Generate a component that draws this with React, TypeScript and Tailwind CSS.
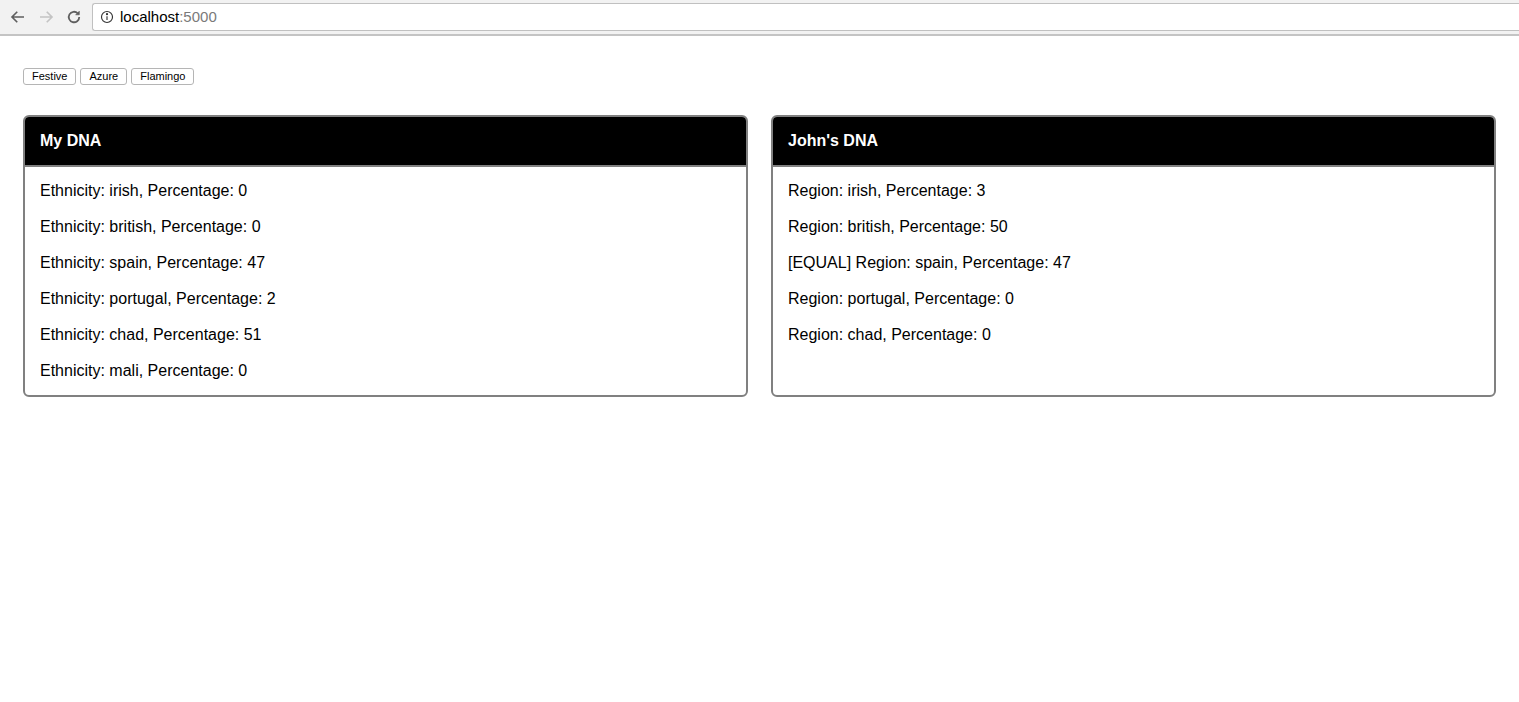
import React from "react";

function Card({ title, rows }: { title: string; rows: string[] }) {
  return (
    <div className="flex-1 border-2 border-[#808080] rounded-[6px] overflow-hidden flex flex-col">
      <div className="bg-black text-white font-bold text-[16px] leading-[18px] h-[50px] flex items-center px-[15px] border-b-2 border-[#808080]">
        {title}
      </div>
      <div className="flex flex-col gap-[18px] px-[15px] pt-[15px] pb-[15px] text-[16px] leading-[18px] text-black">
        {rows.map((r, i) => (
          <div key={i}>{r}</div>
        ))}
      </div>
    </div>
  );
}

export default function App() {
  return (
    <div className="min-h-[702px] bg-white" style={{ fontFamily: '"Liberation Sans", Arial, sans-serif' }}>
      <div className="h-[36px] bg-[#f2f2f2] border-b-2 border-[#c4c4c4] flex items-center">
        <div className="flex items-center pl-[9px] gap-[10px] w-[92px]">
          <svg width="18" height="18" viewBox="0 0 24 24" fill="none" stroke="#5f5f5f" strokeWidth="2.2">
            <path d="M20 12H5M11 5l-7 7 7 7" />
          </svg>
          <svg width="18" height="18" viewBox="0 0 24 24" fill="none" stroke="#c4c4c4" strokeWidth="2.2">
            <path d="M4 12h15M13 5l7 7-7 7" />
          </svg>
          <svg width="18" height="18" viewBox="0 0 24 24" fill="none" stroke="#5f5f5f" strokeWidth="2.4">
            <path d="M19 12a7 7 0 1 1-2.05-4.95" />
            <path d="M19 4v5h-5" fill="#5f5f5f" strokeWidth="1" />
          </svg>
        </div>
        <div className="flex-1 h-[28px] bg-white border border-[#c0c0c0] rounded-l-[3px] border-r-0 flex items-center pl-[7px] gap-[6px]">
          <svg width="14" height="14" viewBox="0 0 16 16" fill="none" stroke="#333" strokeWidth="1.3">
            <circle cx="8" cy="8" r="6.3" />
            <path d="M8 7v4.5" />
            <circle cx="8" cy="4.8" r="0.6" fill="#333" />
          </svg>
          <span className="text-[15px] text-black">
            localhost<span className="text-[#7a7a7a]">:5000</span>
          </span>
        </div>
      </div>
      <div className="px-[23px]">
        <div className="flex gap-[4px] mt-[32px]">
          {["Festive", "Azure", "Flamingo"].map((b) => (
            <button
              key={b}
              className="h-[17px] px-[8px] text-[11px] leading-[15px] border border-[#b5b5b5] rounded-[3px] bg-white text-black"
            >
              {b}
            </button>
          ))}
        </div>
        <div className="flex gap-[23px] mt-[30px]">
          <Card
            title="My DNA"
            rows={[
              "Ethnicity: irish, Percentage: 0",
              "Ethnicity: british, Percentage: 0",
              "Ethnicity: spain, Percentage: 47",
              "Ethnicity: portugal, Percentage: 2",
              "Ethnicity: chad, Percentage: 51",
              "Ethnicity: mali, Percentage: 0",
            ]}
          />
          <Card
            title="John's DNA"
            rows={[
              "Region: irish, Percentage: 3",
              "Region: british, Percentage: 50",
              "[EQUAL] Region: spain, Percentage: 47",
              "Region: portugal, Percentage: 0",
              "Region: chad, Percentage: 0",
            ]}
          />
        </div>
      </div>
    </div>
  );
}
